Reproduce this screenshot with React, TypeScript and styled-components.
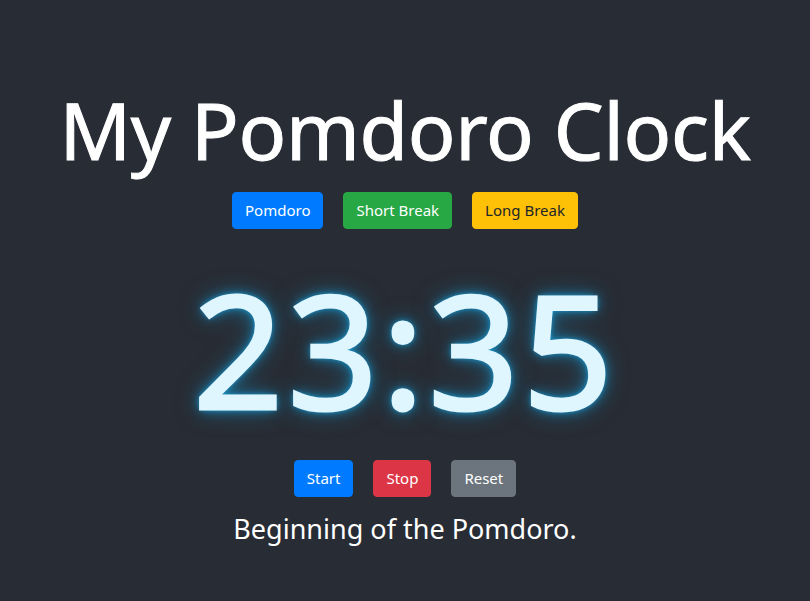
import styled, { createGlobalStyle } from 'styled-components';

const GlobalStyle = createGlobalStyle`
    html, body {
        margin: 0;
        padding: 0;
        background: #282c34;
    }
    body {
        font-family: "Noto Sans", "Open Sans", sans-serif;
        color: #ffffff;
    }
`;

const Page = styled.div`
    min-height: 601px;
    display: flex;
    flex-direction: column;
    align-items: center;
    padding-top: 82px;
    box-sizing: border-box;
`;

const Title = styled.h1`
    margin: 0;
    font-size: 79px;
    font-weight: 400;
    line-height: 96px;
    letter-spacing: -0.3px;
    -webkit-text-stroke: 1px #ffffff;
`;

const ButtonRow = styled.div<{ $top?: number }>`
    display: flex;
    gap: 20px;
    justify-content: center;
    margin-top: ${props => props.$top ?? 0}px;
`;

const variants = {
    primary: { bg: '#007bff', fg: '#ffffff' },
    success: { bg: '#28a745', fg: '#ffffff' },
    warning: { bg: '#ffc107', fg: '#212529' },
    danger: { bg: '#dc3545', fg: '#ffffff' },
    secondary: { bg: '#6c757d', fg: '#ffffff' },
};

type Variant = keyof typeof variants;

const Button = styled.button<{ $variant: Variant }>`
    font-family: inherit;
    font-size: 15px;
    line-height: 23px;
    padding: 6px 12px;
    border-radius: 4px;
    border: 1px solid ${props => variants[props.$variant].bg};
    background: ${props => variants[props.$variant].bg};
    color: ${props => variants[props.$variant].fg};
    cursor: pointer;
`;

const Timer = styled.div`
    margin-top: 39px;
    font-size: 158px;
    font-weight: 400;
    line-height: 160px;
    letter-spacing: 4px;
    color: #dff6ff;
    -webkit-text-stroke: 3px #dff6ff;
    text-shadow: 0 0 5px #1ea8e8, 0 0 12px #1793c8, 0 0 24px rgba(23, 147, 200, 0.6);
`;

const Status = styled.p`
    margin: 14px 0 0;
    font-size: 27px;
    line-height: 36px;
`;

const App = () => {
    return (
        <>
            <GlobalStyle />
            <Page>
                <Title>My Pomdoro Clock</Title>
                <ButtonRow $top={14}>
                    <Button $variant="primary">Pomdoro</Button>
                    <Button $variant="success">Short Break</Button>
                    <Button $variant="warning">Long Break</Button>
                </ButtonRow>
                <Timer>23:35</Timer>
                <ButtonRow $top={32}>
                    <Button $variant="primary">Start</Button>
                    <Button $variant="danger">Stop</Button>
                    <Button $variant="secondary">Reset</Button>
                </ButtonRow>
                <Status>Beginning of the Pomdoro.</Status>
            </Page>
        </>
    );
};

export default App;
